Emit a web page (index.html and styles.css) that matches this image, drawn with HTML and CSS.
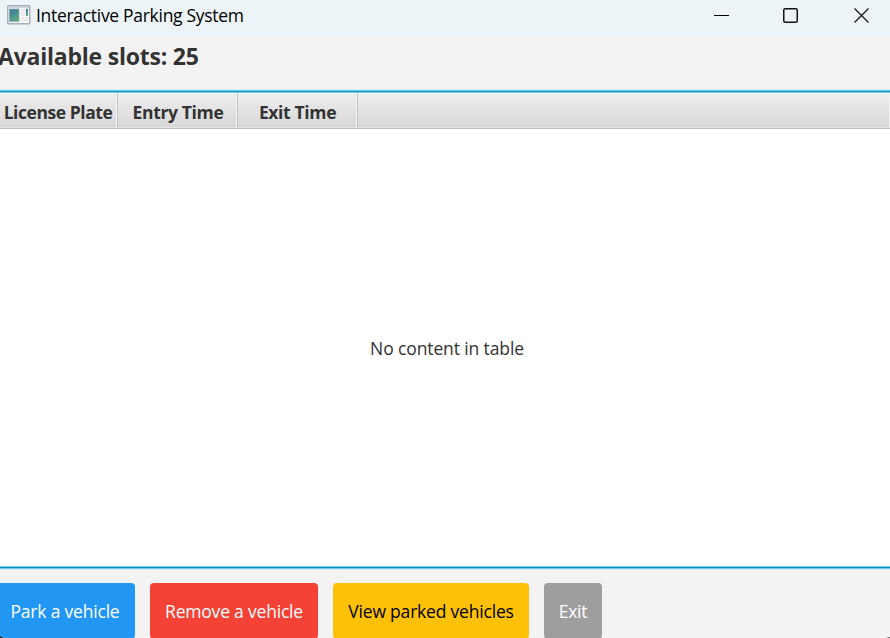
FILE: index.html
```html
<!DOCTYPE html>
<html lang="en">
<head>
<meta charset="utf-8">
<title>Interactive Parking System</title>
<link rel="stylesheet" href="styles.css">
</head>
<body>
<div class="window">
  <header class="titlebar">
    <svg class="app-icon" width="24" height="20" viewBox="0 0 24 20">
      <defs><linearGradient id="pane" x1="0" y1="0" x2=".6" y2="1"><stop offset="0" stop-color="#3f789f"/><stop offset=".5" stop-color="#438e92"/><stop offset="1" stop-color="#66ad7c"/></linearGradient></defs>
      <rect x=".75" y=".75" width="22" height="18" rx="1" fill="#f8f9fa" stroke="#a7b0b9" stroke-width="1.5"/>
      <path d="M1.5 2h20.500" stroke="#c3cad2" stroke-width="1.500"/>
      <rect x="2.500" y="4" width="9.500" height="12.500" fill="url(#pane)" stroke="#83a9b5" stroke-width=".7"/>
      <rect x="14" y="4" width="4" height="7" fill="#e9ebec"/>
      <rect x="14" y="12.500" width="7" height="4" fill="#e9ebec"/>
      <rect x="19" y="4" width="2" height="7" fill="url(#pane)"/>
    </svg>
    <span class="title">Interactive Parking System</span>
    <div class="controls">
      <svg width="16" height="16" viewBox="0 0 16 16"><path d="M0 8.500h15" stroke="#000"/></svg>
      <svg width="16" height="16" viewBox="0 0 16 16"><rect x=".75" y="1.750" width="13.500" height="13.500" rx="1.500" fill="none" stroke="#111" stroke-width="1.500"/></svg>
      <svg class="close" width="16" height="16" viewBox="0 0 16 16"><path d="M.5 1.500l14 14M14.500 1.500l-14 14" stroke="#15151c" stroke-width="1.300"/></svg>
    </div>
  </header>
  <h1 class="slots"><span>Available slots: 25</span></h1>
  <main class="table">
    <div class="columns">
      <div class="column plate"><span>License Plate</span></div>
      <div class="column entry"><span>Entry Time</span></div>
      <div class="column exit-time"><span>Exit Time</span></div>
      <div class="column filler"></div>
    </div>
    <div class="placeholder"><span>No content in table</span></div>
  </main>
  <footer class="actions">
    <button class="park"><span>Park a vehicle</span></button>
    <button class="remove"><span>Remove a vehicle</span></button>
    <button class="view"><span>View parked vehicles</span></button>
    <button class="quit"><span>Exit</span></button>
  </footer>
</div>
</body>
</html>
```
FILE: styles.css
```css
* { box-sizing: border-box; }
body { margin: 0; font: 17.5px/24px "Open Sans", "Noto Sans", sans-serif; color: #333; }
span { white-space: nowrap; }
.window { position: relative; width: 890px; height: 638px; overflow: hidden; background: #f3f3f3; display: flex; flex-direction: column; }
/* rounded window corners against the dark desktop */
.window::before, .window::after { content: ""; position: absolute; bottom: 0; width: 4px; height: 2px; z-index: 1; }
.window::before { left: 0; background: linear-gradient(to top right, #333 50%, transparent 55%); }
.window::after { right: 0; height: 1px; background: linear-gradient(to right, transparent, #555); }
.titlebar { height: 37px; flex: none; background: #ecf4f8; display: flex; align-items: flex-start; padding: 5px 20px 0 7px; color: #000; }
.app-icon { flex: none; }
.title { margin: -2px 0 0 5px; letter-spacing: -0.3px; }
.controls { margin-left: auto; display: flex; gap: 53px; padding-top: 2px; }
.close { margin-left: 2px; }
.slots { margin: 0; height: 52px; flex: none; padding-top: 3px; font-size: 23px; line-height: 32px; font-weight: 700; letter-spacing: -0.22px; }
.slots span { margin-left: -2px; }
.table { flex: none; height: 481px; display: flex; flex-direction: column; background: #fff; border-top: 1px solid #d3e9f1; border-bottom: 1px solid #d3edf5; }
.table::before, .table::after { content: ""; flex: none; height: 3px; background: linear-gradient(#77cce8 33.3%, #0f94c8 33.3% 66.7%, #77cce8 66.7%); }
.columns { flex: none; height: 36px; display: flex; font-weight: 700; }
.column { display: flex; justify-content: center; width: 120px; padding-top: 7px; background: linear-gradient(#eee, #d8d8d8); border-right: 1px solid #c3c3c3; border-bottom: 1px solid #c0c0c0; box-shadow: inset -1px 1px #f5f5f5, inset 0 -1px #e4e4e4; letter-spacing: -0.35px; }
.plate { width: 118px; letter-spacing: -0.45px; padding-right: 1px; }
.entry { padding-left: 1px; }
.filler { flex: 1; border-right: 0; }
.placeholder { flex: 1; display: flex; align-items: center; justify-content: center; padding-left: 4px; letter-spacing: -0.12px; }
.actions { flex: none; display: flex; gap: 15px; padding-top: 13px; }
.actions button { height: 56px; border: 0; border-radius: 4px; padding: 0; font: inherit; letter-spacing: -0.2px; color: #fff; text-align: center; }
.actions .park { width: 135px; background: #2196f3; border-top-left-radius: 0; padding-right: 5px; }
.actions .remove { width: 168px; background: #f44336; }
.actions .view { width: 196px; background: #ffc107; color: #000; }
.actions .quit { width: 58px; background: #9e9e9e; }
```
